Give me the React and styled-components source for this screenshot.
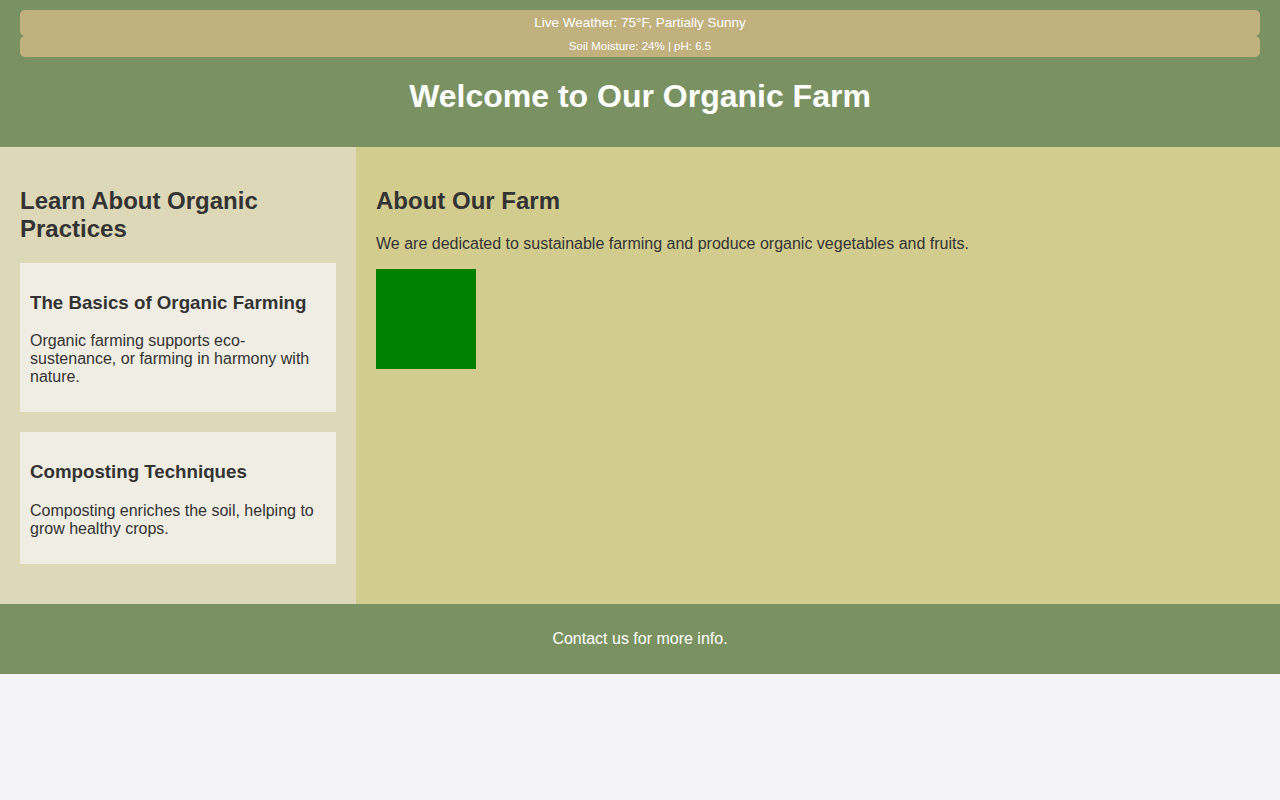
import React from "react";
import styled, { createGlobalStyle } from "styled-components";

const GlobalStyle = createGlobalStyle`
  body {
    margin: 0;
    background: #f4f4f8;
    font-family: "Liberation Sans", Arial, sans-serif;
    color: #333;
  }
`;

const practices = [
  {
    title: "The Basics of Organic Farming",
    text: "Organic farming supports eco-sustenance, or farming in harmony with nature.",
  },
  {
    title: "Composting Techniques",
    text: "Composting enriches the soil, helping to grow healthy crops.",
  },
];

function App() {
  return (
    <>
      <GlobalStyle />
      <Header>
        <InfoBar>Live Weather: 75°F, Partially Sunny</InfoBar>
        <InfoBar small>Soil Moisture: 24% | pH: 6.5</InfoBar>
        <Title>Welcome to Our Organic Farm</Title>
      </Header>
      <Layout>
        <Aside>
          <SectionTitle>Learn About Organic Practices</SectionTitle>
          {practices.map((p) => (
            <Card key={p.title}>
              <CardTitle>{p.title}</CardTitle>
              <Text>{p.text}</Text>
            </Card>
          ))}
        </Aside>
        <Main>
          <SectionTitle>About Our Farm</SectionTitle>
          <Text>
            We are dedicated to sustainable farming and produce organic
            vegetables and fruits.
          </Text>
          <Photo />
        </Main>
      </Layout>
      <Footer>
        <Text>Contact us for more info.</Text>
      </Footer>
    </>
  );
}
export default App;

const Header = styled.header`
  background: #7a9262;
  color: #fff;
  padding: 10px 20px;
  text-align: center;
`;

const InfoBar = styled.div`
  background: #c1b17f;
  border-radius: 5px;
  color: #fff;
  font-size: ${(p) => (p.small ? "11.5px" : "13.5px")};
  line-height: ${(p) => (p.small ? "13px" : "16px")};
  padding: ${(p) => (p.small ? "4px" : "5px")};
`;

const Title = styled.h1`
  font-size: 32px;
  margin: 21px 0 22px;
  line-height: 37px;
`;

const Layout = styled.div`
  display: flex;
`;

const Aside = styled.aside`
  width: 356px;
  box-sizing: border-box;
  flex-shrink: 0;
  padding: 20px;
  background: #ddd8b8;
`;

const Main = styled.main`
  flex: 1;
  padding: 20px;
  background: #d2cd8f;
`;

const SectionTitle = styled.h2`
  font-size: 24px;
  line-height: 28px;
  margin: 20px 0;
`;

const Card = styled.div`
  background: #f0ede4;
  padding: 10px;
  margin-bottom: 20px;
`;

const CardTitle = styled.h3`
  font-size: 18.72px;
  margin: 18.72px 0;
`;

const Text = styled.p`
  font-size: 16px;
  line-height: 18px;
  margin: 16px 0;
`;

const Photo = styled.div`
  width: 100px;
  height: 100px;
  background: green;
`;

const Footer = styled.footer`
  background: #7a9262;
  color: #fff;
  text-align: center;
  padding: 10px;
`;
